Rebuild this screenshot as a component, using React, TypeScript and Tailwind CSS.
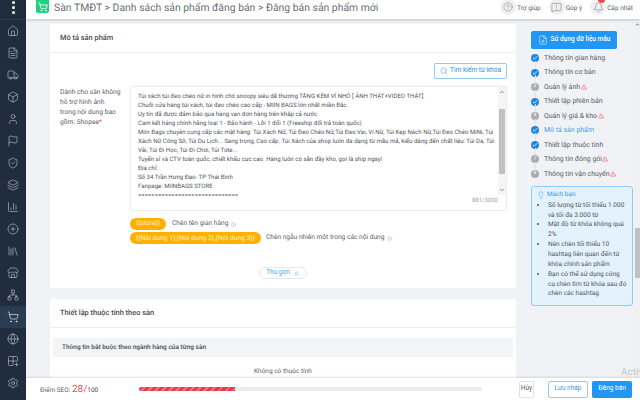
import React from "react";
import { Home, FileText, Truck, Box, User, Flag, ShieldCheck, Layers, BarChart3, CirclePlus, Library, Store, Network, ShoppingCart, Globe, Grid2x2Plus, Settings, CircleHelp, MessageSquareWarning, Bell, Search, ChevronsUp, Lightbulb, FilePlus, TriangleAlert, Check, ChevronUp, ChevronDown, Info } from "lucide-react";

const F = { fontFamily: 'Roboto,"Noto Sans","Liberation Sans",sans-serif' };
const side = [Home, FileText, Truck, Box, User, Flag, ShieldCheck, Layers, BarChart3, CirclePlus, Library, Store, Network, ShoppingCart, Globe, Grid2x2Plus, Settings];
const steps: [string, number, boolean, boolean?][] = [
  ["Thông tin gian hàng", 0, false],
  ["Thông tin cơ bản", 0, false],
  ["Quản lý ảnh", 3, true],
  ["Thiết lập phiên bản", 0, false],
  ["Quản lý giá & kho", 4, true],
  ["Mô tả sản phẩm", 0, false, true],
  ["Thiết lập thuộc tính", 0, false],
  ["Thông tin đóng gói", 7, true],
  ["Thông tin vận chuyển", 8, true],
];
const lines = [
  "Túi xách túi đeo chéo nữ in hình chó snoopy siêu dễ thương TẶNG KÈM VÍ NHỎ [ ẢNH THẬT+VIDEO THẬT]",
  "Chuỗi cửa hàng túi xách, túi đeo chéo cao cấp - MIIN BAGS lớn nhất miền Bắc.",
  "Uy tín đã được đảm bảo qua hàng vạn đơn hàng trên khắp cả nước",
  "Cam kết hàng chính hãng loại 1 - Bảo hành - Lỗi 1 đổi 1 (Freeship đổi trả toàn quốc)",
  "Miin Bags chuyên cung cấp các mặt hàng: Túi Xách Nữ, Túi Đeo Chéo Nữ,Túi Đeo Vai, Ví Nữ, Túi Kẹp Nách Nữ,Túi Đeo Chéo MiNi, Túi",
  "Xách Nữ Công Sở, Túi Du Lịch... Sang trọng, Cao cấp. Túi Xách của shop luôn đa dạng từ mẫu mã, kiểu dáng đến chất liệu: Túi Da, Túi",
  "Vải, Túi Đi Học, Túi Đi Chơi, Túi Tote...",
  "Tuyển sỉ và CTV toàn quốc, chiết khấu cực cao. Hàng luôn có sẵn đầy kho, gọi là ship ngay!",
  "Địa chỉ:",
  "Số 34 Trần Hưng Đạo- TP Thái Bình",
  "Fanpage: MIINBAGS STORE",
  "==============================",
];
const tips = [
  ["Số lượng từ tối thiểu 1.000", "và tối đa 3.000 từ"],
  ["Mật độ từ khóa không quá", "2%"],
  ["Nên chèn tối thiểu 10", "hashtag liên quan đến từ", "khóa chính sản phẩm"],
  ["Bạn có thể sử dụng công", "cụ chèn tìm từ khóa sau đó", "chèn các hashtag"],
];

export default function App() {
  return (
    <div style={F} className="relative flex h-[400px] w-[640px] overflow-hidden bg-[#f0f2f5] text-[6.6px] text-[#5a6068] [text-rendering:geometricPrecision]">
      <aside className="flex w-[26px] shrink-0 flex-col bg-[#1f2d3f] text-[#c3cad3]">
        <div className="flex h-[20px] flex-col items-center gap-[2px] border-b border-[#2a394c] pt-[1px]">
          <span className="h-[3px] w-[3px] rounded-full bg-white" />
          <span className="h-[3px] w-[3px] rounded-full bg-white" />
          <span className="h-[3px] w-[3px] rounded-full bg-white" />
        </div>
        {side.map((I, i) => (
          <div key={i} className={`flex h-[22px] shrink-0 items-center justify-center ${i === 13 ? "bg-[#2a3b52] text-white" : ""}`}>
            <I size={12} strokeWidth={1.2} />
          </div>
        ))}
      </aside>
      <div className="flex min-w-0 flex-1 flex-col">
        <header className="z-10 flex h-[19px] shrink-0 items-start justify-between bg-white pl-[10px] pr-[7px] shadow-[0_1px_3px_rgba(0,0,0,0.2)]">
          <div className="flex items-start gap-[5px]">
            <div className="flex h-[13px] w-[13px] items-center justify-center rounded-b-[2px] bg-[#22d07f] text-white">
              <ShoppingCart size={10} strokeWidth={2} />
            </div>
            <span className="whitespace-nowrap text-[10.4px] leading-[15px] text-[#6b7075]">Sàn TMĐT &gt; Danh sách sản phẩm đăng bán &gt; Đăng bán sản phẩm mới</span>
          </div>
          <div className="flex items-start whitespace-nowrap text-[6.5px] leading-[12px]">
            <div className="flex items-center gap-[1px]">
              <span className="-mt-[1px] flex h-[16px] w-[16px] items-center justify-center rounded-full bg-[#f0f0f0]"><CircleHelp size={10} strokeWidth={1} /></span>Trợ giúp
            </div>
            <div className="ml-[8px] flex items-center gap-[1px]">
              <span className="-mt-[1px] flex h-[16px] w-[16px] items-center justify-center rounded-full bg-[#f0f0f0]"><MessageSquareWarning size={11} strokeWidth={1} /></span>Góp ý
            </div>
            <div className="relative ml-[8px] flex items-center gap-[1px]">
              <span className="-mt-[1px] flex h-[16px] w-[16px] items-center justify-center rounded-full bg-[#f0f0f0]"><Bell size={11} strokeWidth={1} /></span>Cập nhật
              <span className="absolute -top-[4px] left-[8px] h-[7px] w-[7px] rounded-full bg-[#f0483e]" />
            </div>
          </div>
        </header>
        <div className="flex min-h-0 flex-1 overflow-hidden">
          <main className="w-[490px] shrink-0 pl-[24px] pt-[5px]">
            <section className="rounded-[2px] bg-white">
              <h2 className="flex h-[29px] items-center border-b border-[#eceef1] pl-[10px] text-[7.4px] font-medium text-[#444a50]">Mô tả sản phẩm</h2>
              <div className="pb-[9px]">
                <div className="flex justify-end pr-[9px] pt-[10px]">
                  <button className="flex h-[16px] w-[73px] items-center justify-center gap-[2px] whitespace-nowrap rounded-[2px] border border-[#90caf9] text-[6.6px] text-[#2a8bea]">
                    <Search size={8} strokeWidth={1.4} />Tìm kiếm từ khóa
                  </button>
                </div>
                <div className="mt-[7px] flex pl-[10px] pr-[9px]">
                  <div className="w-[70px] shrink-0 whitespace-nowrap pt-[1px] text-[6.7px] leading-[10px]">Dành cho sàn không<br />hỗ trợ hình ảnh<br />trong nội dung bao<br />gồm: Shopee<span className="text-red-500">*</span></div>
                  <div className="h-[125px] w-[377px] rounded-[2px] border border-[#eceef1] shadow-[0_0_2px_rgba(0,0,0,0.08)]">
                    <div className="flex h-[108px]">
                      <div className="flex-1 pl-[7px] pt-[5px] text-[6.08px] leading-[9px] text-[#4f555b]">
                        {lines.map((l, i) => <div key={i} className="whitespace-nowrap">{l}</div>)}
                      </div>
                      <div className="flex w-[8px] shrink-0 flex-col items-center bg-[#f5f5f5] text-[#666]">
                        <ChevronUp size={6} strokeWidth={3} className="mt-[2px]" />
                        <div className="mt-[14px] h-[65px] w-[6px] bg-[#c1c1c1]" />
                        <div className="flex-1" />
                        <ChevronDown size={6} strokeWidth={3} className="mb-[2px]" />
                      </div>
                    </div>
                    <div className="pr-[8px] pt-[1px] text-right text-[6px] text-[#a0a4a8]">881/3000</div>
                  </div>
                </div>
                <div className="ml-[80px] mt-[7px] flex flex-col gap-[2px]">
                  <div className="flex h-[12px] items-center">
                    <span className="flex h-[12px] w-[36px] items-center justify-center rounded-full bg-[#ffb000] text-[6.6px] text-[#fff3d6]">{"{{store}}"}</span>
                    <span className="ml-[6px]">Chèn tên gian hàng</span>
                    <Info size={5} className="ml-[3px] text-[#aaa]" />
                  </div>
                  <div className="flex h-[12px] items-center">
                    <span className="flex h-[12px] w-[131px] items-center justify-center whitespace-nowrap rounded-full bg-[#ffb000] text-[6.8px] text-[#fff3d6]">{"{{Nội dung 1},{Nội dung 2},{Nội dung 3}}"}</span>
                    <span className="ml-[5px]">Chèn ngẫu nhiên một trong các nội dung</span>
                    <Info size={5} className="ml-[3px] text-[#aaa]" />
                  </div>
                </div>
                <div className="ml-[209px] mt-[23px]">
                  <button className="flex h-[12px] w-[48px] items-center justify-center gap-[3px] rounded-full border border-[#e6e9ec] text-[6.5px] text-[#4da3f0]">
                    Thu gọn <ChevronsUp size={7} />
                  </button>
                </div>
              </div>
            </section>
            <section className="mt-[11px] h-[90px] rounded-[2px] bg-white">
              <h2 className="flex h-[29px] items-center border-b border-[#eceef1] pl-[10px] text-[7.4px] font-medium text-[#444a50]">Thiết lập thuộc tính theo sàn</h2>
              <div className="mx-[3px] mt-[10px] flex h-[19px] items-center rounded-[1px] bg-[#f4f5f7] pl-[9px] text-[6.5px] font-medium text-[#444a50]">Thông tin bắt buộc theo ngành hàng của từng sàn</div>
              <div className="mt-[10px] pl-[204px] text-[6.5px]">Không có thuộc tính</div>
            </section>
          </main>
          <aside className="w-[118px] shrink-0 pl-[15px] pt-[12px]">
            <button className="flex h-[18px] w-[86px] items-center justify-center gap-[3px] whitespace-nowrap rounded-[2px] bg-[#2196f3] text-[6.5px] font-medium text-white">
              <FilePlus size={10} strokeWidth={1.3} />Sử dụng dữ liệu mẫu
            </button>
            <ul className="mt-[2px]">
              {steps.map(([t, n, warn, act], i) => (
                <li key={i} className="relative flex h-[14.45px] items-center gap-[4px] whitespace-nowrap text-[6.95px]">
                  {i < 8 && <span className="absolute left-[3.5px] top-[10px] h-[9px] w-[1px] bg-[#dfe2e6]" />}
                  <span className={`flex h-[8px] w-[8px] items-center justify-center rounded-full text-white ${n ? "bg-[#a8acb0] text-[5px]" : "bg-[#1e88e5]"}`}>
                    {n ? n : <Check size={6} strokeWidth={3} />}
                  </span>
                  <span className={`ml-[1px] ${act ? "text-[#4a9bf0]" : ""}`}>{t}</span>
                  {warn && <TriangleAlert size={6} strokeWidth={2} className="-ml-[3.5px] text-[#f0505a]" />}
                </li>
              ))}
            </ul>
            <div className="mt-[5px] h-[120px] w-[102px] rounded-[3px] border border-[#90caf9] bg-[#e3f2fd] px-[5px] pt-[3px] text-[6.5px] leading-[9.85px]">
              <div className="flex items-center gap-[2px] text-[#3d95ea]"><Lightbulb size={8} strokeWidth={1.3} />Mách bạn</div>
              <ul className="mt-[1px] list-disc pl-[11px] text-[#4d545a]">
                {tips.map((t, i) => <li key={i}>{t.map((l, j) => <div key={j} className="whitespace-nowrap">{l}</div>)}</li>)}
              </ul>
            </div>
          </aside>
          <div className="flex w-[6px] shrink-0 flex-col items-center bg-[#f1f1f1] text-[#555]">
            <ChevronUp size={5} strokeWidth={4} className="mt-[3px]" />
            <div className="mt-[201px] h-[50px] w-[5px] bg-[#c1c1c1]" />
          </div>
        </div>
        <footer className="z-10 flex h-[22px] shrink-0 items-center bg-white pl-[14px] pr-[8px] shadow-[0_-1px_2px_rgba(0,0,0,0.12)]">
          <span className="w-[99px] shrink-0 whitespace-nowrap text-[6.5px]">Điểm SEO: <span className="text-[10px] text-[#f0505a]">28/</span><span className="text-[#444]">100</span></span>
          <div className="h-[4px] w-[343px] overflow-hidden rounded-full bg-[#e9ebee]">
            <div className="h-full w-[96px] bg-[repeating-linear-gradient(135deg,#e83b4d_0,#e83b4d_3px,#f0707c_3px,#f0707c_5px)]" />
          </div>
          <button className="ml-[37px] h-[17px] w-[15px] shrink-0 whitespace-nowrap rounded-[1px] border border-[#dfe2e5] text-[6.5px]">Hủy</button>
          <button className="ml-[14px] h-[17px] w-[40px] shrink-0 whitespace-nowrap rounded-[2px] border border-[#90caf9] text-[6.5px] text-[#3d95ea]">Lưu nháp</button>
          <button className="ml-[4px] h-[17px] w-[40px] shrink-0 whitespace-nowrap rounded-[2px] bg-[#2196f3] text-[6.5px] text-white">Đăng bán</button>
        </footer>
      </div>
      <div className="absolute left-[621px] top-[367px] text-[10px] leading-[11px] text-[#c4c6c8]">Activ</div>
      <div className="absolute left-[621px] top-[380px] text-[7px] leading-[8px] text-[#c8cacc]">Go to</div>
    </div>
  );
}
